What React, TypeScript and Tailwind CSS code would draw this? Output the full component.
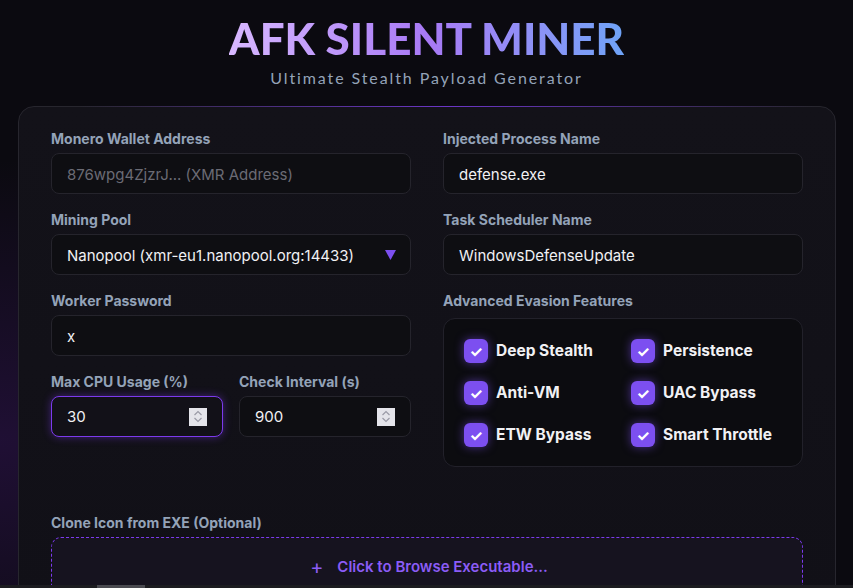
import React from "react";

const font = { fontFamily: "Inter, 'Noto Sans', sans-serif" };
const titleFont = { fontFamily: "Lato, 'Noto Sans', sans-serif" };

function Label({ children, mb = "mb-[6px]" }: { children: React.ReactNode; mb?: string }) {
  return <div className={`text-[14px] leading-4 font-bold text-[#94a3b8] ${mb}`}>{children}</div>;
}

function Field({ label, value, muted }: { label: string; value: string; muted?: boolean }) {
  return (
    <div>
      <Label>{label}</Label>
      <div className="h-[41px] rounded-lg border border-[#25242c] bg-[#0e0e12] px-[15px] pt-[3px] flex items-center">
        <span className={`text-[15px] ${muted ? "text-[#6b6b75]" : "text-[#f1f1f4]"}`}>{value}</span>
      </div>
    </div>
  );
}

function Spinner() {
  return (
    <div className="w-[18px] h-[18px] bg-[#e4e4ea] flex flex-col items-center justify-center gap-[1px]">
      <svg width="10" height="6" viewBox="0 0 10 6"><path d="M1.5 5 L5 1.5 L8.5 5" stroke="#9a9aa6" strokeWidth="1.2" fill="none" /></svg>
      <svg width="10" height="6" viewBox="0 0 10 6"><path d="M1.5 1 L5 4.5 L8.5 1" stroke="#9a9aa6" strokeWidth="1.2" fill="none" /></svg>
    </div>
  );
}

function NumField({ label, value, focused }: { label: string; value: string; focused?: boolean }) {
  return (
    <div>
      <Label>{label}</Label>
      <div
        className={`h-[41px] rounded-lg px-[15px] flex items-center justify-between ${
          focused
            ? "border border-[#7c3aed] bg-[#121118] shadow-[0_0_8px_rgba(124,58,237,0.45)]"
            : "border border-[#25242c] bg-[#0e0e12]"
        }`}
      >
        <span className="text-[15px] text-[#f1f1f4] pt-[2px]">{value}</span>
        <Spinner />
      </div>
    </div>
  );
}

function Check({ label }: { label: string }) {
  return (
    <div className="flex items-center gap-2">
      <div className="w-6 h-6 rounded-[6px] bg-[#7c4ff0] shadow-[0_0_10px_rgba(124,79,240,0.55)] flex items-center justify-center">
        <span className="text-white text-[15px] font-bold leading-none">✓</span>
      </div>
      <span className="text-[15.5px] font-bold text-[#f1f1f4]">{label}</span>
    </div>
  );
}

export default function App() {
  return (
    <div className="relative w-[853px] h-[588px] overflow-hidden bg-[#0b0a10]" style={font}>
      <div className="absolute inset-0 bg-[radial-gradient(ellipse_at_0%_75%,rgba(70,25,120,0.35),transparent_45%)] pointer-events-none" />
      <div className="relative flex flex-col items-center" style={titleFont}>
        <h1 className="mt-[15px] text-[44px] leading-[46px] font-black bg-gradient-to-r from-[#d8b8ff] via-[#a879f5] to-[#6ea3f7] bg-clip-text text-transparent">
          AFK SILENT MINER
        </h1>
        <div className="mt-[5px] text-[16px] tracking-[1.9px] text-[#94a3b8]">Ultimate Stealth Payload Generator</div>
      </div>
      <div className="relative mx-[18px] mt-[16px] w-[818px] rounded-2xl border border-[#27262e] bg-gradient-to-b from-[#131219] to-[#111017] pt-6 px-8">
        <div className="absolute -top-px left-[60px] right-[20px] h-px bg-gradient-to-r from-transparent via-[#7c3aed] to-transparent opacity-80" />
        <div className="grid grid-cols-2 gap-x-8">
          <div className="flex flex-col gap-[18px]">
            <Field label="Monero Wallet Address" value="876wpg4ZjzrJ... (XMR Address)" muted />
            <div>
              <Label>Mining Pool</Label>
              <div className="h-[41px] rounded-lg border border-[#25242c] bg-[#0e0e12] pl-[15px] pr-[14px] flex items-center justify-between">
                <span className="text-[15px] text-[#f1f1f4] pt-[3px]">Nanopool (xmr-eu1.nanopool.org:14433)</span>
                <svg width="11" height="10" viewBox="0 0 11 10"><path d="M0 0 H11 L5.5 10 Z" fill="#7c4ff0" /></svg>
              </div>
            </div>
            <Field label="Worker Password" value="x" />
            <div className="grid grid-cols-2 gap-4">
              <NumField label="Max CPU Usage (%)" value="30" focused />
              <NumField label="Check Interval (s)" value="900" />
            </div>
          </div>
          <div className="flex flex-col gap-[18px]">
            <Field label="Injected Process Name" value="defense.exe" />
            <Field label="Task Scheduler Name" value="WindowsDefenseUpdate" />
            <div>
              <Label mb="mb-[9px]">Advanced Evasion Features</Label>
              <div className="rounded-xl border border-[#22212a] bg-[#0c0c10] px-5 pt-5 pb-[19px] grid grid-cols-2 gap-x-4 gap-y-[18px]">
                <Check label="Deep Stealth" />
                <Check label="Persistence" />
                <Check label="Anti-VM" />
                <Check label="UAC Bypass" />
                <Check label="ETW Bypass" />
                <Check label="Smart Throttle" />
              </div>
            </div>
          </div>
        </div>
        <div className="mt-[48px]">
          <Label>Clone Icon from EXE (Optional)</Label>
          <div className="h-[80px] rounded-[10px] border border-dashed border-[#7c3aed] bg-[#16131f] flex items-start justify-center pt-[18px]">
            <span className="text-[15px] font-semibold text-[#8b5cf6] flex items-center gap-[14px] pl-[4px]">
              <span className="text-[20px] font-normal leading-none">+</span>Click to Browse Executable...
            </span>
          </div>
        </div>
      </div>
      <div className="absolute left-0 right-0 bottom-0 h-[3px] bg-[#1c1c20]">
        <div className="ml-[97px] w-[48px] h-full bg-[#4a4a50]" />
      </div>
    </div>
  );
}
